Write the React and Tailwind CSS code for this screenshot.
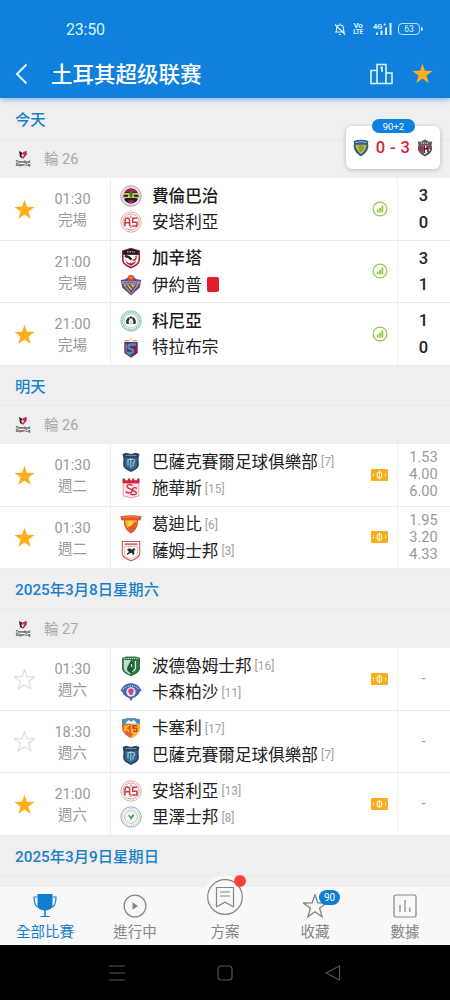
import clsx from 'clsx'

const STAR = 'M12 .8l2.800 8 8.700.2-6.900 5.300 2.500 8.500-7.100-5-7.100 5 2.500-8.500L.5 9l8.700-.2z'

const days = [
  {
    label: '今天',
    round: '輪 26',
    head: 'h-[41.500px]',
    matches: [
      { fav: 'on', time: '01:30', sub: '完場', home: { id: 'fener', name: '費倫巴治', win: true }, away: { id: 'antalya', name: '安塔利亞' }, icon: 'stats', score: ['3', '0'] },
      { fav: null, time: '21:00', sub: '完場', home: { id: 'gaziantep', name: '加辛塔', win: true }, away: { id: 'eyup', name: '伊約普', red: true }, icon: 'stats', score: ['3', '1'] },
      { fav: 'on', time: '21:00', sub: '完場', home: { id: 'konya', name: '科尼亞', win: true }, away: { id: 'trabzon', name: '特拉布宗' }, icon: 'stats', score: ['1', '0'] },
    ],
  },
  {
    label: '明天',
    round: '輪 26',
    head: 'h-[40px]',
    matches: [
      { fav: 'on', time: '01:30', sub: '週二', home: { id: 'basak', name: '巴薩克賽爾足球俱樂部', rank: 7 }, away: { id: 'sivas', name: '施華斯', rank: 15 }, icon: 'cash', odds: ['1.53', '4.00', '6.00'] },
      { fav: 'on', time: '01:30', sub: '週二', home: { id: 'goztepe', name: '葛迪比', rank: 6 }, away: { id: 'samsun', name: '薩姆士邦', rank: 3 }, icon: 'cash', odds: ['1.95', '3.20', '4.33'] },
    ],
  },
  {
    label: '2025年3月8日星期六',
    round: '輪 27',
    head: 'h-[40.500px]',
    matches: [
      { fav: 'off', time: '01:30', sub: '週六', home: { id: 'bodrum', name: '波德魯姆士邦', rank: 16 }, away: { id: 'kasimpasa', name: '卡森柏沙', rank: 11 }, icon: 'cash' },
      { fav: 'off', time: '18:30', sub: '週六', home: { id: 'kayseri', name: '卡塞利', rank: 17 }, away: { id: 'basak', name: '巴薩克賽爾足球俱樂部', rank: 7 }, icon: null },
      { fav: 'on', time: '21:00', sub: '週六', home: { id: 'antalya', name: '安塔利亞', rank: 13 }, away: { id: 'rize', name: '里澤士邦', rank: 8 }, icon: 'cash' },
    ],
  },
  { label: '2025年3月9日星期日', head: 'h-[40.500px]', matches: [] },
]

// Club crests, all on a 22x22 grid
const crests = {
  fener: (
    <>
      <circle cx="11" cy="11" r="10.300" fill="#eee9ee" stroke="#a99ab4" strokeWidth=".9" />
      <circle cx="11" cy="11" r="8.900" fill="none" stroke="#c99bb0" strokeWidth="1" strokeDasharray="1 1.300" />
      <circle cx="11" cy="11" r="7.600" fill="#1c2148" />
      <path d="M4.500 7.200a7.600 7.600 0 0 1 13 0z" fill="#a3263c" />
      <path d="M4 8h14v6H4z" fill="#e8c52e" />
      <path d="M4 9.800h4v2H4zM14 9.800h4v2h-4zM5 13h12v3H5z" fill="#1c2148" />
      <path d="M8 15.500h6l-1 2.700H9z" fill="#c3203a" />
      <path d="M11 5.500c2.500 2 2.400 5.200 0 7.700-2.400-2.500-2.500-5.700 0-7.700z" fill="#318543" />
    </>
  ),
  antalya: (
    <>
      <circle cx="11" cy="11" r="10.200" fill="#fdf3f3" stroke="#dea5a8" strokeWidth=".9" />
      <circle cx="11" cy="11" r="8" fill="#fff" stroke="#dc8a8f" strokeWidth=".8" />
      <path d="M5 15.200V9.700Q5.200 7 7.400 7T9.600 9.700v5.500M5 11.800h4.600" fill="none" stroke="#c93b44" strokeWidth="1.500" />
      <path d="M17.200 7.300h-4.500v3.900h4.200v3.700h-4.700" fill="none" stroke="#c93b44" strokeWidth="1.500" />
      <path d="M11 4.500v2.300M11 14v3" stroke="#c93b44" strokeWidth=".9" />
    </>
  ),
  gaziantep: (
    <>
      <path d="M2 3.400L11 .8l9 2.600v9c0 4.300-4 7-9 9-5-2-9-4.700-9-9z" fill="#a91f31" />
      <path d="M3.600 7.500h14.800v5c0 3.200-3.200 5.500-7.400 7.300-4.200-1.800-7.400-4.100-7.400-7.300z" fill="#fff" />
      <path d="M3.200 4l7.800-2.200L18.800 4v3.700H3.200z" fill="#1f1a1c" />
      <path d="M7 4.900h8" stroke="#b9b2b4" strokeWidth="1.300" strokeDasharray="1.600 .8" />
      <path d="M4.800 8.800l4 1.200 2.600 2.700" fill="none" stroke="#2b1e22" strokeWidth="2.400" />
      <path d="M5.500 12c.5 4.500 6.500 6.500 10.500 1-.2 3.200-2.500 4.600-5 5.700-3.400-1.400-5.700-3.200-5.500-6.700z" fill="#a91f31" />
      <path d="M16 8.500c.7 3-1 5-3.500 4.500" stroke="#a91f31" strokeWidth="1.300" fill="none" />
    </>
  ),
  eyup: (
    <>
      <path d="M.8 6l4.400-.8L11 1.500l5.800 3.700 4.400.8-1.400 7.600L11 21.500l-8.800-7.900z" fill="#5c4a91" />
      <path d="M3.200 10.500L11 20l7.800-9.500z" fill="#e5c63a" />
      <path d="M6 11l5.600 7.500M16.500 10.500l-6 8M9 10.500l5 5" stroke="#5c4a91" strokeWidth="1.700" />
      <path d="M1.600 7.200h18.800v2.600H1.600z" fill="#a897bd" />
      <path d="M4 8.500h14" stroke="#5c4a91" strokeWidth=".9" strokeDasharray="1.200 .8" />
      <circle cx="11" cy="4.200" r="3.300" fill="#d8432f" />
      <path d="M9.500 2.500l1.500 2 1.500-2" stroke="#f0c92e" fill="none" />
    </>
  ),
  konya: (
    <>
      <circle cx="11" cy="11" r="10.200" fill="#e2f2ee" stroke="#86bcae" strokeWidth=".9" />
      <circle cx="11" cy="11" r="8.600" fill="none" stroke="#7cb9aa" strokeWidth="1.200" strokeDasharray="1.200 1" />
      <circle cx="11" cy="11" r="7" fill="#fff" stroke="#8cbfb2" strokeWidth=".6" />
      <path d="M6.500 14C5.300 10.500 7 7.500 9.500 7l.3 2.200-1.200 2 .6 2.800zM15.500 14c1.200-3.500-.5-6.500-3-7l-.3 2.200 1.200 2-.6 2.800z" fill="#353b39" />
      <circle cx="11" cy="7.500" r="1.300" fill="#353b39" />
      <path d="M9.800 10.500h2.400v4.200H9.800z" fill="#c5d1cd" />
    </>
  ),
  trabzon: (
    <>
      <path d="M4.300 6h13.400v11L11 21.700 4.300 17z" fill="#7c2149" />
      <path d="M16.200 8.500h-5c-3.600 0-3.600 4.200-.5 4.700 3.300.5 3.300 3.700.3 3.700H7" fill="none" stroke="#3596c4" strokeWidth="2.300" />
      <path d="M6.200 7.500v8.500L11 19.800" fill="none" stroke="#3596c4" strokeWidth="1.300" />
      <path d="M5 4.600h4.500M12.500 4.600H17" stroke="#c08c92" strokeWidth="1.200" />
      <path d="M11 .5l1 3.500h-2z" fill="#eebb5b" />
    </>
  ),
  basak: (
    <>
      <path d="M2.500 3L6 1.800 11 3l5-1.200L19.500 3l-1 4.500.4 6c0 3.500-3.600 5.500-7.900 7.500-4.300-2-7.900-4-7.900-7.500l.4-6z" fill="#2c4668" />
      <path d="M5.300 7h11.400v7c0 2-2.700 3.600-5.700 5-3-1.400-5.700-3-5.700-5z" fill="#2f6c90" />
      <path d="M6 4.500h10" stroke="#8ea5bd" strokeWidth="1.200" strokeDasharray="1.500 .6" />
      <path d="M8 14.500V8.500h2.500M10.800 16.800V7M10.800 8.500h2.500c1.700 0 1.700 3.300 0 3.300l-.3 3.700" fill="none" stroke="#a9c4d8" strokeWidth="1.100" />
    </>
  ),
  sivas: (
    <>
      <path d="M2.500 1.500h2.700v1.700h2.700V1.500h2.200v1.700h2V1.500h2.200v1.700h2.700V1.500h2.500v5h-17z" fill="#cf2740" />
      <path d="M3.200 6.500h15.600V19L11 20.800 3.200 19z" fill="#fbe7e9" stroke="#e58793" strokeWidth=".8" />
      <path d="M12.500 8.500c-2-1.500-6-1-5.500 1.300.5 2 5 1.500 5.200 4 0 2.500-4.700 2.700-6.500.7M17 11.500c-2-1.500-5-.8-4.600 1 .4 1.600 4.200 1.700 4 3.700-.2 1.900-4.400 2-6 .5" fill="none" stroke="#cf2740" strokeWidth="1.300" />
    </>
  ),
  goztepe: (
    <>
      <path d="M.3 3.500Q11 .8 21.700 3.500l-1.300 4-2.200-.3C18.200 14.500 15 18 11 20.500 7 18 3.800 14.500 3.800 7.200l-2.200.3z" fill="#d9562f" />
      <path d="M5.200 7.200h11.600c0 5.500-2.400 8.700-5.800 11-3.400-2.300-5.800-5.500-5.800-11z" fill="#f6b52a" />
      <path d="M3 4.700q8-1.800 16 0" stroke="#f3ad4d" strokeWidth="1" fill="none" strokeDasharray="1.400 .8" />
      <path d="M16.500 8L8 14.500l3 3.700c3-2 5.300-5 5.500-10.200z" fill="#dd5a22" />
      <circle cx="10" cy="10.500" r="2.500" fill="#fbd04e" />
    </>
  ),
  samsun: (
    <>
      <path d="M2.300 1.500h17.400v12c0 3.500-4 5.300-8.700 7.500-4.700-2.200-8.700-4-8.700-7.500z" fill="#fff" stroke="#cb5560" strokeWidth="1.100" />
      <path d="M4.500 3.200h13v2h-13z" fill="#d4717a" />
      <path d="M4.500 6.500h13v6.800c0 2.500-2.800 3.900-6.500 5.700-3.700-1.800-6.500-3.200-6.500-5.700z" fill="#fff" stroke="#e29aa1" strokeWidth=".7" />
      <path d="M7 9.500l2.500-1.200 2.500 1.200 2-1.500 1.500 1.200-1.500 1.500.5 3-1.500 1.500-1-2.200-2 .2-2.500 1.800-.8-1.200L9 12z" fill="#2c2d30" />
    </>
  ),
  bodrum: (
    <>
      <path d="M2 2.800L6.500 1.500h9L20 2.800V13c0 4-4.500 6.500-9 8.300C6.500 19.500 2 17 2 13z" fill="#2f7444" />
      <path d="M3.800 5h6.700v14.500C7 18 3.800 16 3.800 13z" fill="#c6dcc8" />
      <path d="M3.500 3.400h15" stroke="#cfe3d1" strokeWidth="1" strokeDasharray="1.300 .8" />
      <path d="M9 17c-2-1-2.500-3-1.500-5L10 7c2-1 3.500.5 3.700 2.500L11.500 13l3 3.500-3.500 2z" fill="#1d5c33" />
      <path d="M15.500 6v7.500q-1 2-3 3.300M11.500 9v3" stroke="#e4efe5" strokeWidth="1.200" fill="none" />
    </>
  ),
  kasimpasa: (
    <>
      <path d="M.5 9.500C3 4.500 6.500 2.200 11 2.200s8 2.300 10.500 7.300l-2 1.500-.5 2-3 2.500-3 1.500L11 20l-2-3-3-1.500L3 13l-.5-2z" fill="#4467ab" />
      <path d="M3 8.500C7 3.600 15 3.600 19 8.500" fill="none" stroke="#b3c4e2" strokeWidth="1.300" strokeDasharray="1.200 .8" />
      <circle cx="11" cy="11" r="4.700" fill="#dfe5f3" />
      <path d="M11 7.500c2.500 0 3.300 2 2.300 4L12 14h-2l-1.300-2.500c-1-2-.2-4 2.300-4z" fill="#c94379" />
    </>
  ),
  kayseri: (
    <>
      <path d="M2 2.500Q11-.2 20 2.500v7c0 6-4 9.500-9 11.500C6 19 2 15.500 2 9.500z" fill="#e7602a" />
      <path d="M11 6h9v4c0 5.500-4 9-9 11z" fill="#f5b62c" />
      <path d="M2 2.500Q11-.2 20 2.500v4.200H2z" fill="#3c93cc" />
      <path d="M5 6.700L8.500 3l2.500 1.700L14 3l3 3.700z" fill="#f2f7fa" />
      <path d="M5 8v6.500M9 8l-3.500 3.300L9 14.500" stroke="#fbc630" strokeWidth="1.500" fill="none" />
      <path d="M17 8.700h-4v2.600h3.700v3H13" stroke="#d6402a" strokeWidth="1.500" fill="none" />
      <path d="M9 17l2-1 2 1-2 2.500z" fill="#e7602a" />
    </>
  ),
  rize: (
    <>
      <circle cx="11" cy="11" r="10.200" fill="#f6faf9" stroke="#87a9ae" strokeWidth=".9" />
      <circle cx="11" cy="11" r="8.400" fill="none" stroke="#b3c3cf" strokeWidth="1.100" strokeDasharray="1 1" />
      <circle cx="11" cy="11" r="6.400" fill="#eef8f1" stroke="#d09ba5" strokeWidth=".7" />
      <path d="M10.500 14.500c.3-2.500-.8-3.500-2.700-5 2-.5 3.200.5 3.300 2 .3-1.700 1-2.700 3-3.200-.1 3-1.800 3.200-3.600 6.200z" fill="#2f9b58" />
    </>
  ),
  chennai: (
    <>
      <path d="M2 2.500Q11-.5 20 2.500l-.5 3 .5 2c0 6.500-4 10.500-9 13.700C6 18 2 14 2 7.500l.5-2z" fill="#2f5a86" />
      <path d="M4.300 7h13.400c0 5.300-3 8.700-6.700 11.500C7.300 15.700 4.300 12.300 4.300 7z" fill="#b9bb3e" />
      <path d="M8 8.500l3-1.700 3 1.700v4l-3 3.700-3-3.700z" fill="#8f993b" />
      <path d="M4 4.300q7-2 14 0" stroke="#a3c0d6" strokeWidth="1.200" fill="none" />
    </>
  ),
  neu: (
    <>
      <path d="M2 3l4 .5L11 .5l5 3 4-.5-1 3.500.7 6c-.7 4-4.200 6.500-8.700 9-4.500-2.500-8-5-8.700-9L3 6.500z" fill="#5a565c" />
      <path d="M5 8h12v6l-6 5-6-5z" fill="#e6e2e4" />
      <path d="M4.500 8H9v9l-4.500-3zM12.500 8h4.500v4h-4.500z" fill="#b52a3c" />
      <path d="M10 8v9M14.500 12v4M9 12h6" stroke="#28262b" strokeWidth="1.700" />
      <path d="M6 5h10" stroke="#d8d5d9" strokeWidth="1.600" strokeDasharray="1.500 1" />
    </>
  ),
}

function Crest({ id, className = 'size-[22px]' }) {
  return (
    <svg viewBox="0 0 22 22" className={clsx('shrink-0', className)}>
      {crests[id]}
    </svg>
  )
}

function LeagueLogo() {
  return (
    <svg viewBox="0 0 16 18" className="h-[18px] w-4 shrink-0">
      <path d="M4 1l3.500 1.800v2L6.200 4.500 7.500 8.500 5 7z" fill="#2a2328" />
      <path d="M7.500 2.500l4-1.700.4 3.500-3.500 4.500-1.600-1.300 2.200-2z" fill="#cf2944" />
      <text x="8" y="13" textAnchor="middle" fontSize="3.700" fontWeight="700" fill="#333">Trendyol</text>
      <text x="8" y="16.400" textAnchor="middle" fontSize="3.400" fontWeight="700" fill="#333">Süper Lig</text>
    </svg>
  )
}

function Star({ state }) {
  if (!state) return null
  return (
    <svg viewBox="0 0 24 24" className="mt-px size-[21px]">
      {state === 'on' ? (
        <path d={STAR} fill="#fdae1a" />
      ) : (
        <path d={STAR} fill="none" stroke="#dadada" strokeWidth="1.200" />
      )}
    </svg>
  )
}

function RowIcon({ type }) {
  if (type === 'stats') {
    return (
      <svg viewBox="0 0 16 16" className="size-4">
        <circle cx="8" cy="8" r="6.900" fill="none" stroke="#92c54b" strokeWidth="1.200" />
        <path d="M5.700 8.500v3M8.100 6.800v4.700M10.400 4.600v6.900" stroke="#8bc832" strokeWidth="1.700" />
      </svg>
    )
  }
  if (type === 'cash') {
    return (
      <svg viewBox="0 0 17 12" className="h-3 w-[17px]">
        <rect width="17" height="12" rx="1" fill="#f8ae1c" />
        <ellipse cx="8.500" cy="6" rx="2.300" ry="3" fill="none" stroke="#fff3d0" strokeWidth="1.100" />
        <path d="M8.500 1.500v9M2.500 4.500v3M14.500 4.500v3" stroke="#fff3d0" strokeWidth=".9" />
      </svg>
    )
  }
  return null
}

function Team({ team }) {
  return (
    <div className="flex h-[26.500px] items-center">
      <Crest id={team.id} />
      <span className={clsx('ml-[10px] pt-[2px] text-[16.600px] leading-[26px] whitespace-nowrap', team.win ? 'font-medium text-[#1c1c1c]' : 'text-[#222]')}>
        {team.name}
      </span>
      {team.rank && <span className="ml-[3px] pt-px text-[12px] text-[#a2a2a2]">[{team.rank}]</span>}
      {team.red && <span className="ml-[5px] h-[15px] w-3 rounded-[2px] bg-[#e21d2c]" />}
    </div>
  )
}

function MatchRow({ match }) {
  return (
    <div className="flex h-[62.500px] border-b border-[#ececec] bg-white">
      <div className="flex w-12 items-center justify-center">
        <Star state={match.fav} />
      </div>
      <div className="flex w-[63px] flex-col justify-center border-r border-[#efefef] pt-[3px] pr-[13px] text-center text-[14.500px] leading-[21px] text-[#999]">
        <span>{match.time}</span>
        <span>{match.sub}</span>
      </div>
      <div className="flex flex-1 flex-col justify-center pl-[9px]">
        <Team team={match.home} />
        <Team team={match.away} />
      </div>
      <div className="flex w-[37px] items-center justify-center pl-[2px]">
        <RowIcon type={match.icon} />
      </div>
      <div className="flex w-[53px] flex-col items-center justify-center border-l border-[#f1f1f1] pr-px">
        {match.score && match.score.map((s, i) => (
          <span key={i} className="pt-px text-[16.500px] leading-[25.500px] font-medium text-[#222]">{s}</span>
        ))}
        {match.odds && match.odds.map((o) => (
          <span key={o} className="text-[14.600px] leading-[17px] text-[#999]">{o}</span>
        ))}
        {!match.score && !match.odds && <span className="text-[14px] text-[#999]">-</span>}
      </div>
    </div>
  )
}

function StatusBar() {
  return (
    <div className="flex h-[58px] items-center pr-[27px] pl-[66px] text-[#d5f3ff]">
      <span className="pt-px text-[16px] tracking-[-0.200px]">23:50</span>
      <div className="ml-auto flex items-center">
        <svg viewBox="0 0 12 14" className="h-[14px] w-3" fill="none" stroke="currentColor" strokeWidth="1.200">
          <path d="M2.500 10V6.500a3.500 3.500 0 0 1 7 0V10M1 10h10M5 12.500h2M6 1.500V3M1 2.500L11 12.500" />
        </svg>
        <div className="ml-[7px] flex w-[10px] flex-col items-center text-[6.500px] leading-[6.500px] font-bold tracking-[-0.300px]">
          <span className="text-[8px]">Vo</span>
          <span>LTE</span>
        </div>
        <svg viewBox="0 0 20 14" className="ml-[10px] h-[14px] w-5">
          <text x="0" y="6.500" fontSize="7.500" fontWeight="700" fill="currentColor">4G</text>
          <path d="M10.500 2.500h2.500M11.700 1.200v2.600" stroke="currentColor" strokeWidth=".8" />
          <path d="M4 10.500V13M8.500 8.500V13M13 5.500V13M17.500 1V13" stroke="currentColor" strokeWidth="2" />
        </svg>
        <div className="ml-[5px] flex h-3 w-[22px] items-center justify-center rounded-[4px] border-[1.500px] border-[#b4e3fb] text-[8.500px] leading-none">
          63
        </div>
        <span className="ml-px h-1 w-[2px] rounded-r bg-[#d5f3ff]" />
      </div>
    </div>
  )
}

function Header() {
  return (
    <header className="relative z-10 h-[98px] bg-[#0f80dc] shadow-[0_1px_6px_rgba(15,128,220,0.600)]">
      <StatusBar />
      <div className="flex h-[31px] items-center pr-[17px] pl-[15px] text-white">
        <svg viewBox="0 0 13 22" className="h-[22px] w-[13px]" fill="none" stroke="#e2f5ff" strokeWidth="2">
          <path d="M11.500 1.500L2 11l9.500 9.500" />
        </svg>
        <h1 className="ml-[23px] pt-px font-['Roboto','Noto_Sans_CJK_SC',sans-serif] text-[21.500px] leading-[31px] font-medium">土耳其超级联赛</h1>
        <svg viewBox="0 0 25 22" className="ml-auto h-[22px] w-[25px]" fill="none" stroke="#e2f5ff" strokeWidth="1.600">
          <path d="M8 20.500H2V7.500h6M8 20.500V1.500h9v19zM17 10h6v10.500h-6M11.500 5.200l1.500-.9V9" />
        </svg>
        <svg viewBox="0 0 24 24" className="ml-[18px] size-[21px]">
          <path d={STAR} fill="#fdae1a" />
        </svg>
      </div>
    </header>
  )
}

function LiveCard() {
  return (
    <div className="absolute top-[126px] right-[10px] z-20 flex h-[43px] w-[94px] items-center justify-between rounded-[6px] bg-white px-[6px] shadow-[0_1px_5px_rgba(0,0,0,0.220)]">
      <span className="absolute -top-[7px] left-[26px] h-[14px] w-[43px] rounded-full bg-[#0f80dc] text-center text-[9.500px] leading-[15px] text-white">90+2</span>
      <Crest id="chennai" className="size-[18px]" />
      <span className="pt-px text-[16.500px] font-medium tracking-[0.350px] whitespace-pre text-[#d4213d]">0 - 3</span>
      <Crest id="neu" className="size-[18px]" />
    </div>
  )
}

function Tab({ label, active, children }) {
  return (
    <div className={clsx('flex w-[90px] flex-col items-center pt-[5px]', active ? 'text-[#117dd2]' : 'text-[#858585]')}>
      <div className="relative flex h-[27px] items-center justify-center">{children}</div>
      <span className="mt-[3px] text-[14.500px] leading-[22px]">{label}</span>
    </div>
  )
}

function TabBar() {
  return (
    <nav className="relative z-10 flex h-[58px] bg-[#f8f8f8]">
      <Tab label="全部比賽" active>
        <svg viewBox="0 0 24 25" className="h-[25px] w-6">
          <path d="M4.500 1h15v11c0 3-2 5-6.700 5.500v5.500h3.700V24h-9v-1h3.700v-5.500c-4.700-.5-6.700-2.500-6.700-5.500z" fill="currentColor" />
          <path d="M4.500 4H1c0 5 .5 9.500 5 10.500M19.500 4H23c0 5-.5 9.500-5 10.500" fill="none" stroke="currentColor" strokeWidth="1.200" />
        </svg>
      </Tab>
      <Tab label="進行中">
        <svg viewBox="0 0 24 24" className="size-6">
          <circle cx="12" cy="12" r="10.900" fill="none" stroke="currentColor" strokeWidth="1.200" />
          <path d="M9.500 8.300v7.400L15 12z" fill="currentColor" />
        </svg>
      </Tab>
      <Tab label="方案">
        <div className="absolute -top-[17px] flex size-11 items-center justify-center rounded-full bg-[#f8f8f8]">
          <svg viewBox="0 0 36 36" className="size-9" fill="none" stroke="currentColor" strokeWidth="1.200">
            <circle cx="18" cy="18" r="17.300" />
            <path d="M9.500 8.500h17v19.300L18 23.300l-8.500 4.500zM13 13h10M13 17h10" />
          </svg>
          <span className="absolute top-0 right-[1px] size-3 rounded-full bg-[#fb4140]" />
        </div>
      </Tab>
      <Tab label="收藏">
        <svg viewBox="0 0 24 24" className="size-6" fill="none" stroke="currentColor" strokeWidth="1.300">
          <path d={STAR} />
        </svg>
        <span className="absolute -top-[2px] left-[16px] h-[15px] w-[21px] rounded-full bg-[#117dd2] text-center text-[10px] leading-[15.500px] text-white">90</span>
      </Tab>
      <Tab label="數據">
        <svg viewBox="0 0 24 24" className="size-6" fill="none" stroke="currentColor" strokeWidth="1.200">
          <rect x="1" y="1" width="22" height="22" rx="1.500" />
          <path d="M7 11v7M12 6v12M16.800 13.500V18" />
        </svg>
      </Tab>
    </nav>
  )
}

function SystemNav() {
  return (
    <div className="flex h-[55px] items-center justify-center gap-[92px] bg-black text-[#555]">
      <svg viewBox="0 0 16 16" className="size-4" fill="none" stroke="currentColor" strokeWidth="1.200">
        <path d="M0 1h16M0 8h16M0 15h16" />
      </svg>
      <svg viewBox="0 0 16 16" className="size-4" fill="none" stroke="currentColor" strokeWidth="1.200">
        <rect x="1" y="1" width="14" height="14" rx="3" />
      </svg>
      <svg viewBox="0 0 16 16" className="size-4" fill="none" stroke="currentColor" strokeWidth="1.200" strokeLinejoin="round">
        <path d="M14.500 1v14L1 8z" />
      </svg>
    </div>
  )
}

export default function App() {
  return (
    <div className="relative flex h-[1000px] w-[450px] flex-col overflow-hidden bg-[#efefef] font-['Roboto','Noto_Sans_CJK_TC',sans-serif]">
      <Header />
      <LiveCard />
      <main className="min-h-0 flex-1 overflow-hidden">
        {days.map((day) => (
          <section key={day.label}>
            <div className={clsx('flex items-center border-b border-[#e8e8e8] pt-[4px] pl-[15px] text-[15.300px] font-medium text-[#1a7fca]', day.head)}>
              {day.label}
            </div>
            {day.round && (
              <div className="flex h-[38.500px] items-center pl-[15px] text-[14.500px] text-[#aaa]">
                <LeagueLogo />
                <span className="ml-[13px] pt-[2px]">{day.round}</span>
              </div>
            )}
            {day.matches.map((match, i) => (
              <MatchRow key={i} match={match} />
            ))}
          </section>
        ))}
      </main>
      <TabBar />
      <SystemNav />
    </div>
  )
}
